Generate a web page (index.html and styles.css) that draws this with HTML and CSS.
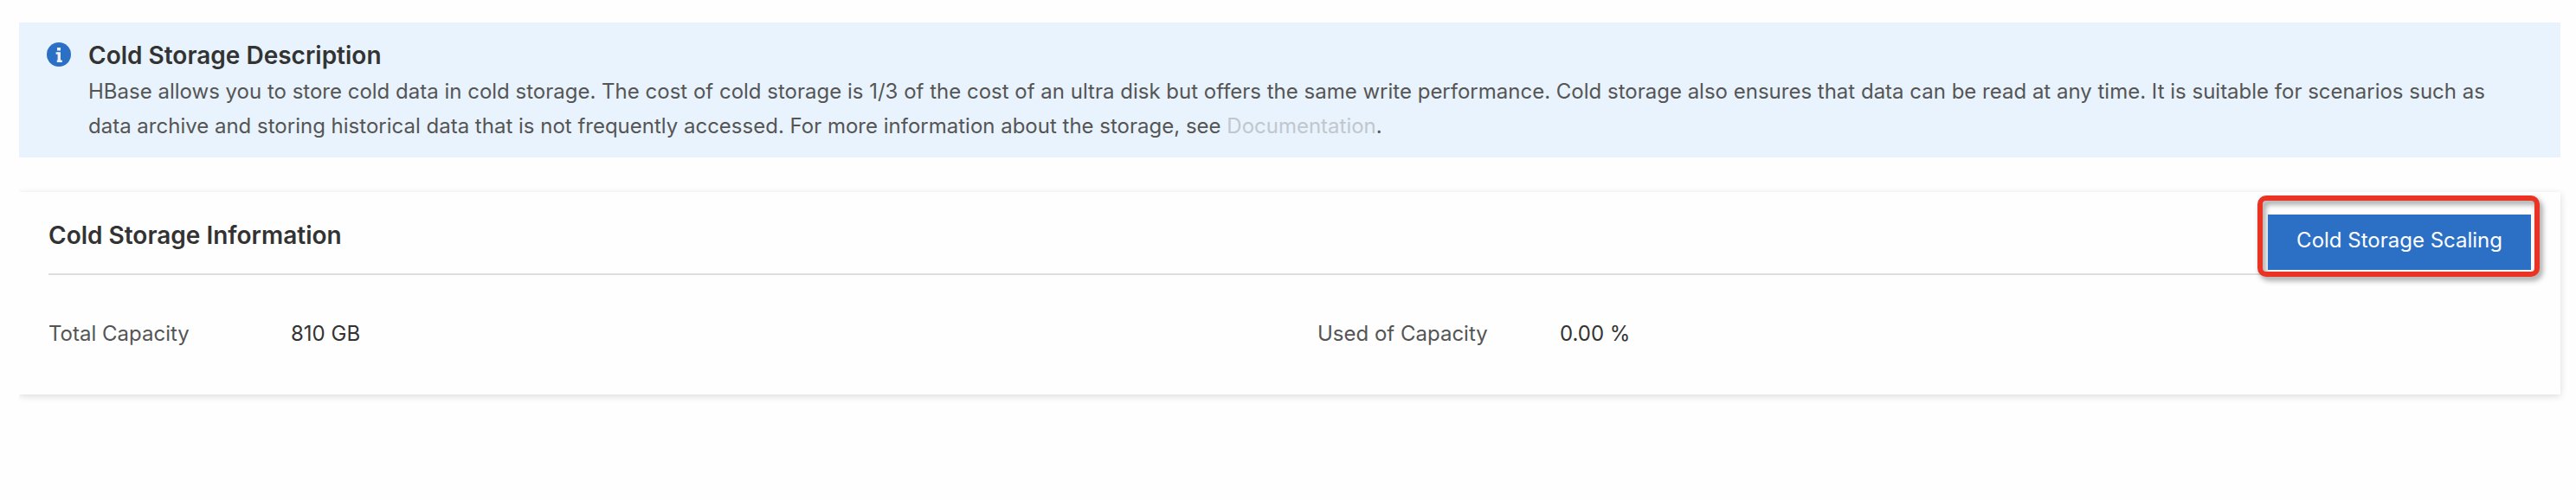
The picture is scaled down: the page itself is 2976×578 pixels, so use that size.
FILE: index.html
```html
<!DOCTYPE html>
<html lang="en">
<head>
  <meta charset="UTF-8">
  <title>Cold Storage</title>
  <link rel="stylesheet" href="styles.css">
</head>
<body>
  <div class="notice">
    <svg class="notice-icon" viewBox="0 0 28 28" aria-hidden="true">
      <circle cx="14" cy="14" r="14" fill="#2c70c6"/>
      <path d="M12 6h4v3.6h-4zM10.6 11.2H16v9.2h1.8V23h-6v-2.6h.8v-6.6h-2z" fill="#e8f3fd"/>
    </svg>
    <div class="notice-content">
      <h2>Cold Storage Description</h2>
      <p>HBase allows you to store cold data in cold storage. The cost of cold storage is 1/3 of the cost of an ultra disk but offers the same write performance. Cold storage also ensures that data can be read at any time. It is suitable for scenarios such as data archive and storing historical data that is not frequently accessed. For more information about the storage, see <a href="#">Documentation</a>.</p>
    </div>
  </div>

  <div class="card">
    <div class="card-header">
      <h2>Cold Storage Information</h2>
      <div class="action">
        <div class="highlight"></div>
        <button type="button">Cold Storage Scaling</button>
      </div>
    </div>
    <dl class="info">
      <div class="info-item">
        <dt>Total Capacity</dt>
        <dd>810 GB</dd>
      </div>
      <div class="info-item">
        <dt>Used of Capacity</dt>
        <dd>0.00 %</dd>
      </div>
    </dl>
  </div>
</body>
</html>
```
FILE: styles.css
```css
body {
  font-family: Inter, Arial, sans-serif;
  font-size: 24px;
  line-height: 40px;
  color: #555;
  background-color: #fefefe;
  margin: 0;
  padding: 26px 18px 26px 22px;
}

h2 {
  font-size: 28px;
  font-weight: 600;
  color: #333;
  margin: 0;
}

.notice {
  display: flex;
  gap: 20px;
  background-color: #e8f3fd;
  padding: 18px 32px 16px;
  margin-bottom: 40px;
}

.notice-icon {
  flex: none;
  width: 28px;
  height: 28px;
  margin-top: 5px;
}

.notice-content p {
  margin: 2px 0 0;
}

.notice-content a {
  color: #c1c7cd;
  text-decoration: none;
}

.card {
  background-color: #fefefe;
  padding: 26px 34px 50px;
  box-shadow: 0 2px 8px rgba(0, 0, 0, 0.14);
  /* no shadow on the left side */
  clip-path: inset(-18px -18px -18px 0);
}

.card-header {
  display: flex;
  justify-content: space-between;
  align-items: flex-start;
  padding-bottom: 4px;
  border-bottom: 2px solid #dedede;
}

.card-header h2 {
  line-height: 48px;
}

.action {
  position: relative;
}

.action button {
  position: relative;
  display: block;
  font-family: inherit;
  font-size: 24px;
  line-height: 40px;
  color: white;
  background-color: #2c70c6;
  border: none;
  padding: 10px 33px 14px;
  cursor: pointer;
}

.action button:hover {
  background-color: #215cab;
}

.highlight {
  position: absolute;
  top: -22px;
  right: -10px;
  bottom: -8px;
  left: -12px;
  border: 6px solid #ea3323;
  border-radius: 10px;
  filter: drop-shadow(3px 4px 3px rgba(0, 0, 0, 0.4));
}

.info {
  display: grid;
  grid-template-columns: 1fr 1fr;
  gap: 64px;
  margin: 48px 0 0;
}

.info-item {
  display: flex;
}

.info dt {
  width: 280px;
}

.info dd {
  margin: 0;
  color: #333;
}
```
